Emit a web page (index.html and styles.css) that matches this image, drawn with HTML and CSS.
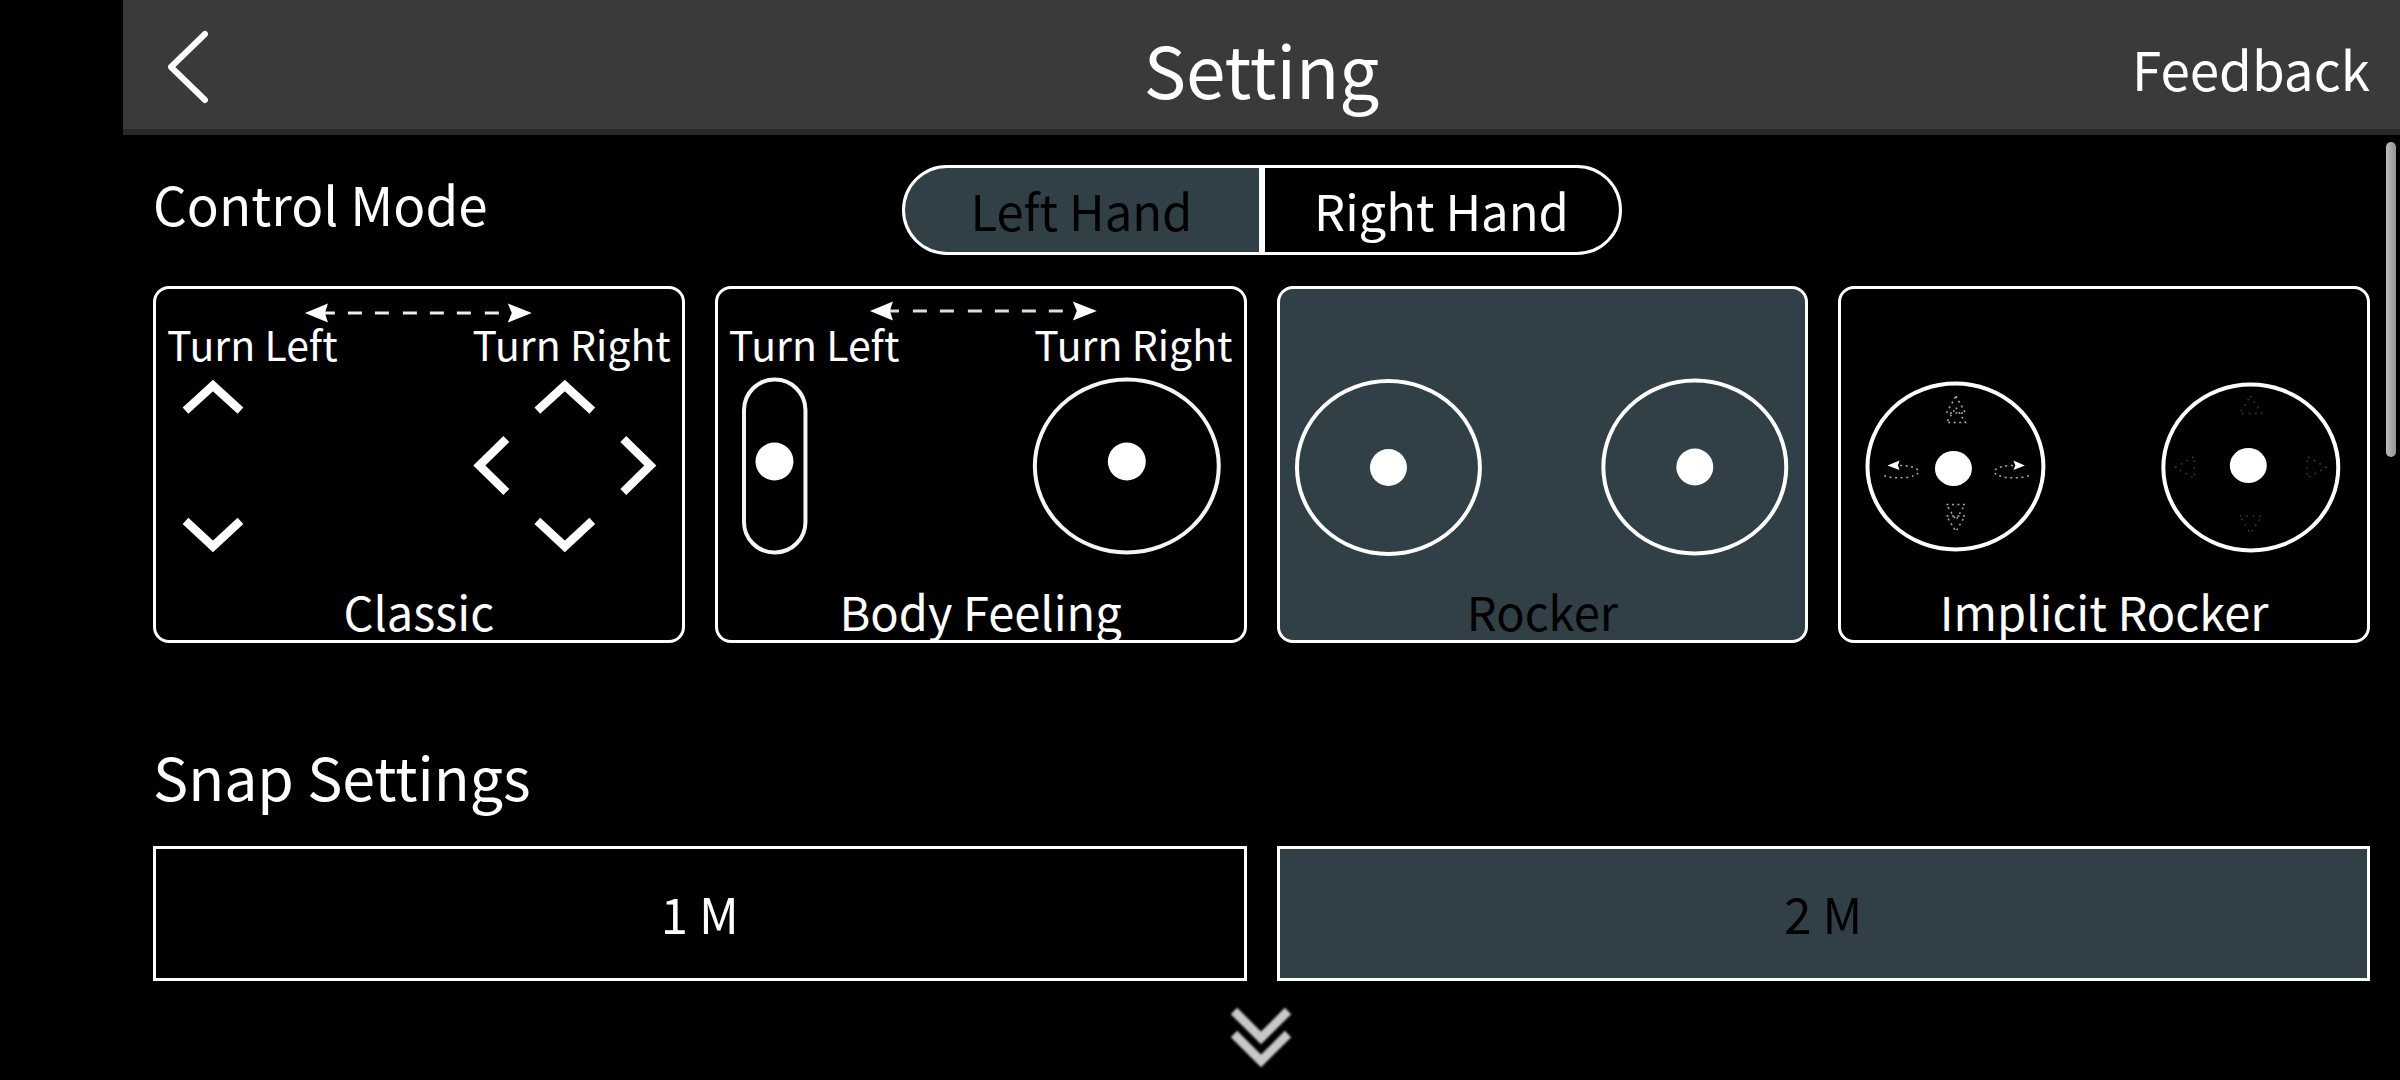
FILE: index.html
```html
<!DOCTYPE html>
<html lang="en">
<head>
  <meta charset="utf-8">
  <meta name="viewport" content="width=device-width, initial-scale=1">
  <title>Setting</title>
  <link rel="stylesheet" href="styles.css">
</head>
<body>
  <div class="screen">
    <header class="topbar">
      <button class="back" type="button" aria-label="Back">
        <svg class="back-icon" viewBox="0 0 48 80" aria-hidden="true">
          <path d="M40 6 6 39 40 72" fill="none" stroke="#fff" stroke-width="6" stroke-linecap="round" stroke-linejoin="round"/>
        </svg>
      </button>
      <h1 class="title">Setting</h1>
      <a class="feedback" href="#feedback">Feedback</a>
    </header>

    <main class="content">
      <section class="control" aria-labelledby="control-heading">
        <div class="control-head">
          <h2 class="control-title" id="control-heading">Control Mode</h2>
          <div class="segment">
            <button class="segment-item is-selected" type="button" aria-pressed="true">Left Hand</button>
            <button class="segment-item" type="button" aria-pressed="false">Right Hand</button>
          </div>
        </div>

        <div class="modes">
          <button class="mode" type="button" aria-pressed="false">
            <svg class="swing" viewBox="0 0 526 36" aria-hidden="true">
              <path d="M164 24H179M192 24h14M219 24h14M247 24h14M274 24h14M301 24h14M329 24h14" stroke="#eee" stroke-width="3"/>
              <path d="M149 24 172 14.500 169 24 172 33.500ZM376 24 352 14.500 356 24 352 33.500Z" fill="#fff"/>
            </svg>
            <span class="turns"><span>Turn Left</span><span>Turn Right</span></span>
            <svg class="art" viewBox="0 72 526 220" aria-hidden="true">
              <g fill="none" stroke="#fff" stroke-width="8.500">
                <path d="M29.500 121.500 57 96.500 84.500 121.500"/>
                <path d="M29.500 232 57 257.500 84.500 232"/>
                <path d="M381.500 121.500 409 96.500 436.500 121.500"/>
                <path d="M381.500 232 409 257.500 436.500 232"/>
                <path d="M350.500 150 323.500 176.500 350.500 203"/>
                <path d="M467.500 150 494.500 176.500 467.500 203"/>
              </g>
            </svg>
            <span class="mode-name">Classic</span>
          </button>

          <button class="mode" type="button" aria-pressed="false">
            <svg class="swing" viewBox="0 0 526 36" aria-hidden="true">
              <path d="M167 22H181M195 22h14M222 22h14M250 22h14M277 22h14M304 22h14M331 22h14" stroke="#ddd" stroke-width="3"/>
              <path d="M152 22 175 12.500 172 22 175 31.500ZM379 22 355 12.500 359 22 355 31.500Z" fill="#fff"/>
            </svg>
            <span class="turns"><span>Turn Left</span><span>Turn Right</span></span>
            <svg class="art" viewBox="0 72 526 220" aria-hidden="true">
              <rect x="26" y="90.500" width="61.500" height="173" rx="30.500" fill="none" stroke="#f5f5f5" stroke-width="4"/>
              <circle cx="56.500" cy="172.500" r="19" fill="#fff"/>
              <ellipse cx="409" cy="177" rx="92" ry="86.500" fill="none" stroke="#f5f5f5" stroke-width="4"/>
              <circle cx="409" cy="172.500" r="19" fill="#fff"/>
            </svg>
            <span class="mode-name">Body Feeling</span>
          </button>

          <button class="mode is-selected" type="button" aria-pressed="true">
            <svg class="art" viewBox="0 72 526 220" aria-hidden="true">
              <ellipse cx="108.500" cy="178.500" rx="91.500" ry="86.500" fill="none" stroke="#fff" stroke-width="4"/>
              <circle cx="108.500" cy="178.500" r="18.500" fill="#fff"/>
              <ellipse cx="415" cy="178" rx="91.500" ry="86.500" fill="none" stroke="#fff" stroke-width="4"/>
              <circle cx="415" cy="178" r="18.500" fill="#fff"/>
            </svg>
            <span class="mode-name">Rocker</span>
          </button>

          <button class="mode" type="button" aria-pressed="false">
            <svg class="art" viewBox="0 72 526 220" aria-hidden="true">
              <ellipse cx="114.500" cy="177.500" rx="88" ry="83" fill="none" stroke="#fff" stroke-width="4"/>
              <ellipse cx="112.500" cy="179.500" rx="18.500" ry="17.500" fill="#fff"/>
              <g fill="none" stroke="#aaa" stroke-width="1.500" stroke-dasharray="2 3.500">
                <path d="M115 107 124.500 124H105.500Z"/>
                <path d="M115 118.500 124.500 133.500H105.500Z"/>
                <path d="M105.500 215.500H124L115 231Z"/>
                <path d="M105.500 227H124L115 242.500Z"/>
                <path d="M59 176.500A19.500 6.200 0 1 1 40 185"/>
                <path d="M172 176.500A19.500 6.200 0 1 0 191 185"/>
              </g>
              <path d="M46.500 176.500 58.500 171.500 57 176.500 58.500 181ZM184 176.500 172.500 171.500 174.500 176.500 172.500 181Z" fill="#fff"/>
              <ellipse cx="410" cy="178.500" rx="87.500" ry="83" fill="none" stroke="#fff" stroke-width="4"/>
              <ellipse cx="407.500" cy="176.500" rx="18.500" ry="17.500" fill="#fff"/>
              <g fill="none" stroke="#3c3c3c" stroke-width="1.500" stroke-dasharray="1.500 5">
                <path d="M409.500 107 421 124.500H399Z"/>
                <path d="M399 227H421L409.500 244.500Z"/>
                <path d="M334.500 178.500 353.500 167.500V189Z"/>
                <path d="M485.500 178.500 466.500 167.500V189Z"/>
              </g>
            </svg>
            <span class="mode-name">Implicit Rocker</span>
          </button>
        </div>
      </section>

      <section class="snap" aria-labelledby="snap-heading">
        <h2 class="snap-title" id="snap-heading">Snap Settings</h2>
        <div class="snap-options">
          <button class="snap-option" type="button" aria-pressed="false">1 M</button>
          <button class="snap-option is-selected" type="button" aria-pressed="true">2 M</button>
        </div>
      </section>

      <svg class="more" viewBox="0 0 70 72" aria-hidden="true">
        <g fill="none" stroke="#c8c8c8" stroke-width="9">
          <path d="M7 8 34 35 61 8"/>
          <path d="M7 31 34 58 61 31"/>
        </g>
      </svg>
      <div class="scroll-thumb"></div>
    </main>
  </div>
</body>
</html>
```
FILE: styles.css
```css
* {
  box-sizing: border-box;
}

body {
  margin: 0;
  background: #000;
  color: #fff;
  font-family: "Noto Sans CJK SC", "Noto Sans", sans-serif;
}

h1,
h2 {
  margin: 0;
  font-weight: 400;
}

button {
  margin: 0;
  padding: 0;
  border: 0;
  background: none;
  color: inherit;
  font: inherit;
  cursor: pointer;
}

svg {
  display: block;
}

.screen {
  min-height: 100vh;
  padding-left: 123px;
}

.topbar {
  display: grid;
  grid-template-columns: 1fr auto 1fr;
  align-items: center;
  height: 135px;
  padding: 7px 30px 0;
  border-bottom: 6px solid #282828;
  background: #3a3a3a;
}

.back {
  justify-self: start;
  padding: 0 12px;
}

.back-icon {
  width: 48px;
  height: 80px;
}

.title {
  font-size: 71px;
  line-height: 100px;
}

.feedback {
  justify-self: end;
  color: inherit;
  font-size: 53px;
  line-height: 72px;
  text-decoration: none;
}

.content {
  position: relative;
  padding: 30px 30px 0;
}

.control-head {
  display: grid;
  grid-template-columns: 1fr 720px 1fr;
  align-items: start;
}

.control-title {
  font-size: 53px;
  line-height: 76px;
}

.segment {
  display: grid;
  grid-template-columns: 1fr 1fr;
  gap: 6px;
  height: 90px;
  overflow: hidden;
  border: 3px solid #fff;
  border-radius: 45px;
  background: #fff;
}

.segment-item {
  background: #000;
  font-size: 49px;
  line-height: 80px;
}

.segment-item.is-selected,
.mode.is-selected,
.snap-option.is-selected {
  background: #313f46;
  color: #000;
}

.modes {
  display: grid;
  grid-template-columns: repeat(4, 1fr);
  gap: 30px;
  margin-top: 31px;
}

.mode {
  display: flex;
  flex-direction: column;
  justify-content: flex-end;
  height: 357px;
  border: 3px solid #fff;
  border-radius: 16px;
}

.swing {
  width: 100%;
  height: 36px;
}

.turns {
  display: flex;
  justify-content: space-between;
  padding: 0 11px;
  font-size: 41px;
  line-height: 36px;
}

.art {
  width: 100%;
  height: 220px;
}

.mode-name {
  font-size: 47px;
  line-height: 59px;
  text-align: center;
}

.snap {
  margin-top: 89px;
}

.snap-title {
  font-size: 59px;
  line-height: 88px;
}

.snap-options {
  display: grid;
  grid-template-columns: 1fr 1fr;
  gap: 30px;
  margin-top: 26px;
}

.snap-option {
  height: 135px;
  padding-bottom: 2px;
  border: 3px solid #fff;
  font-size: 49px;
}

.more {
  width: 70px;
  height: 72px;
  margin: 22px auto 0;
  filter: blur(1px);
}

.scroll-thumb {
  position: absolute;
  top: 7px;
  right: 4px;
  width: 10px;
  height: 315px;
  border-radius: 5px;
  background: linear-gradient(90deg, #bdbdbd, #939393);
}
```
